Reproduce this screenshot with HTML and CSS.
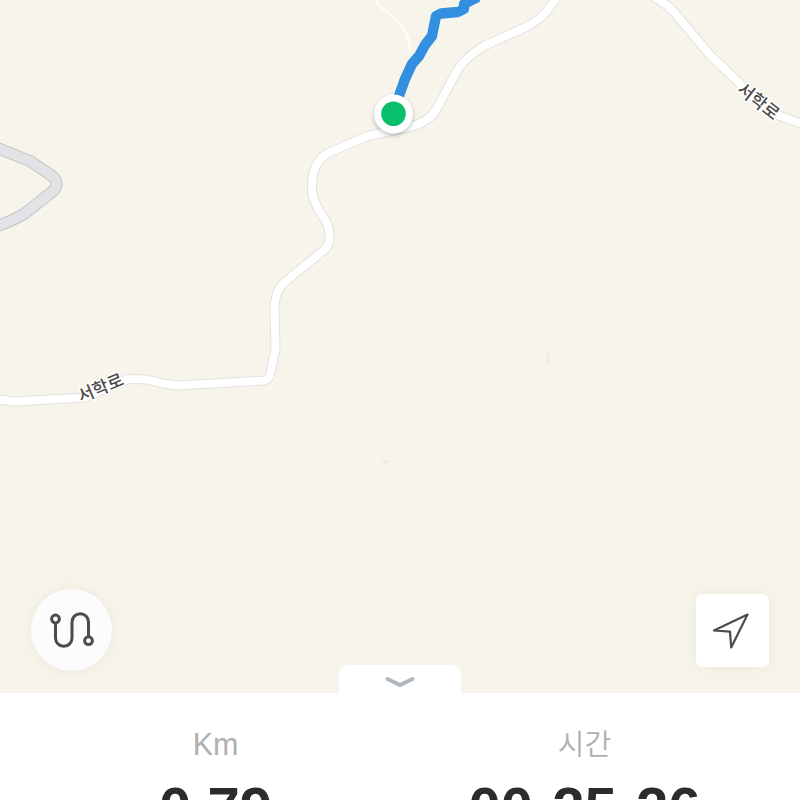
FILE: index.html
```html
<!DOCTYPE html>
<html lang="ko">
<head>
    <meta charset="UTF-8">
    <meta name="viewport" content="width=device-width, initial-scale=1.0">
    <title>코스 지도</title>
    <link rel="stylesheet" href="styles.css">
</head>
<body>
    <div class="screen">
        <div class="map">
            <svg class="map-canvas" viewBox="0 0 800 693">
                <defs>
                    <path id="road-main" d="M-5 399 L15 401.500 L85 397.500 L128 379 L147 379.500 Q162 384 177 385.500 L264 380.500 Q268 380 270 375 L275.500 349 L274.500 309 Q275 289 286 281 L324 250 Q330 245 329.500 234 Q329 225 324 218 Q311 200 312 187 Q312 162 328 153 L368 136 L410 127 Q430 121 436 110 L456 73 Q462 60 484 46 L528 26 Q540 19 546 12 L558 -4"/>
                    <path id="road-east" d="M650 -5 Q666 3 674 12 L710 55 L755 98 L780 116 L805 125"/>
                    <path id="track" d="M-5 147 L30 161 L52 176 Q61 184 52 192 L24 214 Q12 221 -5 227"/>
                </defs>

                <!-- 도로 -->
                <use href="#track" class="track-edge"/>
                <use href="#track" class="track-fill"/>
                <path class="path-thin" d="M373 -3 Q382 9 392 16 Q409 28 410 50"/>
                <use href="#road-main" class="road-edge"/>
                <use href="#road-east" class="road-edge"/>
                <use href="#road-main" class="road-fill"/>
                <use href="#road-east" class="road-fill"/>
                <path class="speck" d="M547.500 352 L549 363"/>
                <path class="speck" d="M382 461 L389 462"/>

                <text class="road-name" x="0" y="6" transform="translate(100.500 388) rotate(-23)">서학로</text>
                <text class="road-name" x="0" y="6" transform="translate(758.500 101.500) rotate(38)">서학로</text>

                <!-- 이동 경로 -->
                <path class="route" d="M478 -3 L464 4 L464 9 L458 12 L441 13.500 L436 16 L432 36 L425 45 L419 56 L412 64 L405 79 L394 110"/>
                <circle class="marker" cx="393.500" cy="114" r="19.500"/>
                <circle class="marker-dot" cx="393.500" cy="113.700" r="12.300"/>
            </svg>

            <div class="map-controls">
                <button type="button" class="course-button" aria-label="코스">
                    <svg width="48" height="42" viewBox="0 0 48 42">
                        <path d="M7.500 14 V29 A8.250 8.250 0 0 0 24 29 V13 A8.250 8.250 0 0 1 40.500 13 V28"/>
                        <circle cx="7.500" cy="10" r="3.900"/>
                        <circle cx="40.500" cy="31.700" r="3.900"/>
                    </svg>
                </button>
                <button type="button" class="location-button" aria-label="현재 위치">
                    <svg width="40" height="40" viewBox="0 0 40 40">
                        <path d="M34.500 4.500 L1 20.500 L17 21.700 L18.200 37.500 Z"/>
                    </svg>
                </button>
            </div>
        </div>

        <div class="panel">
            <div class="panel-handle">
                <svg width="32" height="14" viewBox="0 0 32 14">
                    <path d="M3.500 4 L16 10 L28.500 4"/>
                </svg>
            </div>
            <div class="stat">
                <div class="stat-label">Km</div>
                <div class="stat-value">0.79</div>
            </div>
            <div class="stat">
                <div class="stat-label stat-label-ko">시간</div>
                <div class="stat-value">00<span class="colon">:</span>25<span class="colon">:</span>26</div>
            </div>
        </div>
    </div>
</body>
</html>
```
FILE: styles.css
```css
body {
    margin: 0;
    font-family: "Liberation Sans", "Noto Sans CJK KR", sans-serif;
    background: #fff;
    overflow: hidden;
}
.screen {
    display: flex;
    flex-direction: column;
    height: 800px;
    overflow: hidden;
}
.map {
    flex: 0 0 693px;
    display: grid;
    background: #f7f4eb;
}
.map-canvas {
    grid-area: 1 / 1;
    width: 800px;
    height: 693px;
}
.map-canvas path,
.map-canvas use {
    fill: none;
    stroke-linejoin: round;
}
.road-edge {
    stroke: #e3e1df;
    stroke-width: 10;
}
.road-fill {
    stroke: #fff;
    stroke-width: 8;
}
.track-edge {
    stroke: #c3c3c5;
    stroke-width: 12;
}
.track-fill {
    stroke: #e1e3e7;
    stroke-width: 10;
}
.path-thin {
    stroke: #fefcf8;
    stroke-width: 3;
}
.speck {
    stroke: #eeebe9;
    stroke-width: 3;
}
.road-name {
    font-family: "Noto Sans CJK KR", sans-serif;
    font-size: 17.3px;
    font-weight: 500;
    text-anchor: middle;
    fill: #4a4a4a;
    stroke: #fff;
    stroke-width: 3px;
    paint-order: stroke;
}
.route {
    stroke: #338fe0;
    stroke-width: 10.3;
}
.marker {
    fill: #fff;
    filter: drop-shadow(0 2px 2px rgba(0, 0, 0, 0.25));
}
.marker-dot {
    fill: #0abf6b;
}
.map-controls {
    grid-area: 1 / 1;
    align-self: end;
    display: flex;
    justify-content: space-between;
    align-items: center;
    padding: 0 31px 22px;
    z-index: 1;
}
.map-controls button {
    display: flex;
    align-items: center;
    justify-content: center;
    padding: 0;
    border: none;
    background: #fdfcfd;
    box-shadow: 0 0 14px rgba(120, 110, 70, 0.09);
}
.map-controls svg {
    fill: none;
    stroke: #4c4c4e;
}
.map-controls .course-button {
    width: 81px;
    height: 82px;
    border-radius: 50%;
}
.course-button svg {
    stroke-width: 3;
}
.course-button circle {
    fill: #fff;
}
.map-controls .location-button {
    width: 73px;
    height: 73px;
    border-radius: 6px;
    background: #fff;
}
.location-button svg {
    stroke-width: 2.2;
    stroke-linejoin: round;
}
.panel {
    position: relative;
    flex: 1;
    display: flex;
    padding: 0 31px;
    background: #fff;
}
.panel-handle {
    position: absolute;
    top: -28px;
    left: 339px;
    width: 122px;
    height: 34px;
    display: flex;
    justify-content: center;
    padding-top: 10px;
    box-sizing: border-box;
    border-radius: 9px 9px 0 0;
    background: #fff;
}
.panel-handle path {
    fill: none;
    stroke: #adb9be;
    stroke-width: 4;
    stroke-linecap: round;
}
.stat {
    flex: 1;
    padding-top: 31px;
    text-align: center;
}
.stat-label {
    height: 40px;
    line-height: 40px;
    font-size: 30.5px;
    color: #b0b0b0;
}
.stat-label-ko {
    font-family: "Noto Sans CJK KR", sans-serif;
    line-height: 36px;
    font-size: 29px;
    font-weight: 350;
}
.stat-value {
    margin-top: 12px;
    height: 64px;
    font-size: 58px;
    line-height: 64px;
    font-weight: bold;
    color: #2c2c2e;
}
.colon {
    vertical-align: -4px;
    line-height: 1;
}
```
